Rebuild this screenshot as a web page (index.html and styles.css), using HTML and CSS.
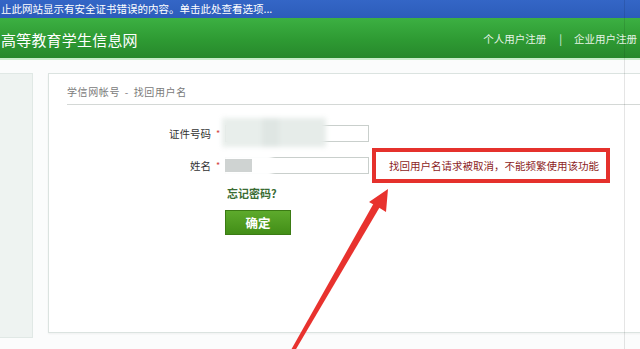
FILE: index.html
```html
<!DOCTYPE html>
<html lang="zh-CN">
<head>
<meta charset="utf-8">
<title>找回用户名</title>
<link rel="stylesheet" href="styles.css">
</head>
<body>
<div class="page">
  <div class="infobar">止此网站显示有安全证书错误的内容。单击此处查看选项...</div>
  <div class="header">
    <div class="site-title">高等教育学生信息网</div>
    <div class="header-links"><span>个人用户注册</span><span class="sep">|</span><span>企业用户注册</span></div>
  </div>
  <div class="strip"></div>
  <div class="content">
    <div class="sidebar"></div>
    <div class="panel">
      <div class="panel-title">学信网帐号 - 找回用户名</div>
      <div class="form">
        <div class="row row-id">
          <div class="label">证件号码</div>
          <div class="star">*</div>
          <div class="field">
            <div class="input"></div>
            <div class="blur blur-id"></div>
          </div>
        </div>
        <div class="row row-name">
          <div class="label">姓名</div>
          <div class="star">*</div>
          <div class="field">
            <div class="input"></div>
            <div class="blur blur-name-white"></div>
            <div class="blur blur-name-gray"></div>
          </div>
          <div class="error-box">找回用户名请求被取消，不能频繁使用该功能</div>
        </div>
        <div class="forgot">忘记密码?</div>
        <div class="submit">确定</div>
      </div>
    </div>
  </div>
  <div class="seam"></div>
  <svg class="arrow" width="640" height="349" viewBox="0 0 640 349">
    <polygon points="291,350 295.5,350 381,205 375,201" fill="#e8322e"/>
    <polygon points="388,189 369,202 378,207 386,212" fill="#e8322e"/>
  </svg>
</div>
</body>
</html>
```

FILE: styles.css
```css
html, body {
  margin: 0;
  padding: 0;
}
body {
  width: 640px;
  height: 349px;
  overflow: hidden;
  background: #fbfcfc;
  font-family: "Noto Sans CJK SC", "Noto Sans", sans-serif;
}
.page {
  position: relative;
  width: 640px;
  height: 349px;
  overflow: hidden;
}
.infobar {
  height: 18px;
  line-height: 18px;
  background: linear-gradient(#3466c6, #2c5cba);
  color: #ffffff;
  font-size: 10.5px;
  padding-left: 1px;
  white-space: nowrap;
}
.header {
  height: 40px;
  background: linear-gradient(#3cb042, #2e9a33 55%, #27882b);
  display: flex;
  align-items: center;
  justify-content: space-between;
  color: #ffffff;
}
.site-title {
  font-size: 15px;
  margin-left: 1px;
  letter-spacing: 0.2px;
  margin-top: 2px;
  white-space: nowrap;
}
.header-links {
  font-size: 10.5px;
  color: #e6f4e6;
  white-space: nowrap;
  margin-right: 3px;
  display: flex;
}
.header-links .sep {
  margin: 0 12px 0 13px;
}
.strip {
  height: 2px;
  background: #c9ecca;
}
.content {
  display: flex;
  gap: 15px;
  padding-top: 13px;
}
.sidebar {
  width: 32px;
  height: 263px;
  background: #eef3f1;
  border: 1px solid #e0e8e5;
  border-left: none;
  flex: none;
}
.panel {
  flex: none;
  width: 620px;
  height: 258px;
  background: #ffffff;
  border: 1px solid #dbe3e0;
  box-shadow: 0 1px 2px rgba(0, 0, 0, 0.05);
  padding-left: 18px;
  box-sizing: content-box;
}
.panel-title {
  margin-top: 12px;
  font-size: 10px;
  line-height: 12px;
  letter-spacing: 0.6px;
  word-spacing: 2px;
  color: #7a7a7a;
  padding-bottom: 6px;
  border-bottom: 1px solid #d4d8d6;
  margin-right: 20px;
}
.form {
  padding-top: 20px;
}
.row {
  display: flex;
  align-items: center;
}
.row-name {
  margin-top: 6px;
}
.label {
  width: 144px;
  text-align: right;
  font-size: 10.5px;
  line-height: 14px;
  color: #333333;
}
.star {
  width: 14px;
  text-align: center;
  color: #d23b3b;
  font-size: 9px;
  line-height: 14px;
}
.field {
  position: relative;
  width: 144px;
  height: 17px;
}
.input {
  box-sizing: border-box;
  width: 144px;
  height: 17px;
  border: 1px solid #c9cfcc;
  background: #ffffff;
}
.blur {
  position: absolute;
}
.blur-id {
  left: -3px;
  top: -7px;
  width: 104px;
  height: 29px;
  background: linear-gradient(90deg, #e8eeeb 0, #e8eeeb 38%, #dfe6e3 38%, #dfe6e3 55%, #e6ece9 55%);
  filter: blur(2.5px);
}
.blur-name-white {
  left: -3px;
  top: -3px;
  width: 50px;
  height: 23px;
  background: #ffffff;
  filter: blur(2px);
}
.blur-name-gray {
  left: 0;
  top: 2px;
  width: 27px;
  height: 13px;
  background: #cfd3d2;
  filter: blur(0.6px);
}
.error-box {
  margin-left: 3px;
  width: 238px;
  height: 35px;
  box-sizing: border-box;
  border: 4px solid #e5312c;
  background: #ffffff;
  color: #8c1d1d;
  font-size: 10.5px;
  line-height: 27px;
  padding-left: 13px;
  white-space: nowrap;
}
.forgot {
  margin-top: 3px;
  margin-left: 160px;
  font-size: 11px;
  line-height: 14px;
  font-weight: bold;
  color: #3a6c33;
}
.submit {
  margin-top: 10px;
  margin-left: 158px;
  width: 66px;
  height: 25px;
  box-sizing: border-box;
  border: 1px solid #3b7b14;
  background: linear-gradient(#5daa2c, #428e17);
  color: #ffffff;
  font-size: 12.5px;
  font-weight: bold;
  line-height: 23px;
  text-align: center;
}
.seam {
  position: absolute;
  left: 624px;
  top: 0;
  width: 1px;
  height: 349px;
  background: rgba(0, 0, 0, 0.1);
}
.arrow {
  position: absolute;
  left: 0;
  top: 0;
}
```
